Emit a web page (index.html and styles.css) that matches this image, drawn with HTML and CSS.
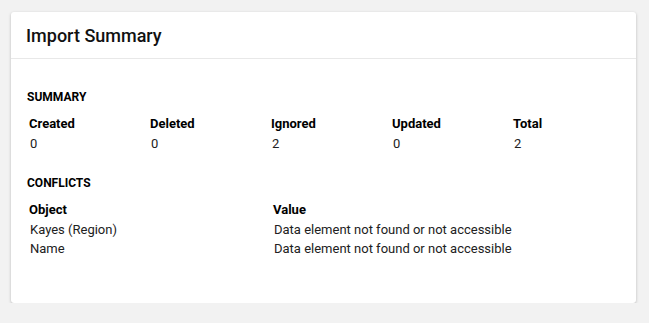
FILE: index.html
```html
<!DOCTYPE html>
<html lang="en">
  <head>
    <meta charset="UTF-8" />
    <meta name="viewport" content="width=device-width, initial-scale=1.0" />
    <title>Import Summary</title>
    <link rel="stylesheet" href="styles.css">
  </head>
  <body>
    <div class="card">
      <div class="card-header">
        <h2>Import Summary</h2>
      </div>

      <div class="card-body">
        <h3 class="section-title">Summary</h3>
        <div class="summary-grid">
          <div class="th">Created</div>
          <div class="th">Deleted</div>
          <div class="th">Ignored</div>
          <div class="th">Updated</div>
          <div class="th">Total</div>
          <div class="td">0</div>
          <div class="td">0</div>
          <div class="td">2</div>
          <div class="td">0</div>
          <div class="td">2</div>
        </div>

        <h3 class="section-title">Conflicts</h3>
        <div class="conflicts-grid">
          <div class="th">Object</div>
          <div class="th">Value</div>
          <div class="td">Kayes (Region)</div>
          <div class="td">Data element not found or not accessible</div>
          <div class="td">Name</div>
          <div class="td">Data element not found or not accessible</div>
        </div>
      </div>
    </div>
  </body>
</html>
```

FILE: styles.css
```css
body {
  font-family: Roboto, "Liberation Sans", sans-serif;
  margin: 0;
  padding: 12px 13px 0 11px;
  background-color: #f2f2f2;
  color: #212121;
}
.card {
  background-color: #fff;
  border-radius: 3px;
  box-shadow: 0 1px 3px rgba(0, 0, 0, 0.25);
  height: 291px;
}
.card-header {
  height: 46px;
  border-bottom: 1px solid #e8e8e8;
  padding: 0 15px;
  display: flex;
  align-items: center;
}
.card-header h2 {
  margin: 0;
  font-size: 18px;
  font-weight: 500;
  color: #111;
}
.card-body {
  padding: 31px 16px 0 16px;
}
.section-title {
  margin: 0 0 8px 0;
  font-size: 12px;
  font-weight: 700;
  text-transform: uppercase;
  color: #000;
}
.summary-grid {
  display: grid;
  grid-template-columns: repeat(5, 121px);
  margin-bottom: 23px;
}
.conflicts-grid {
  display: grid;
  grid-template-columns: 244px 1fr;
}
.th {
  font-size: 13px;
  font-weight: 700;
  color: #000;
  padding: 4px 2px 3px 2px;
}
.td {
  font-size: 13px;
  padding: 2px 3px 2px 3px;
}
```
